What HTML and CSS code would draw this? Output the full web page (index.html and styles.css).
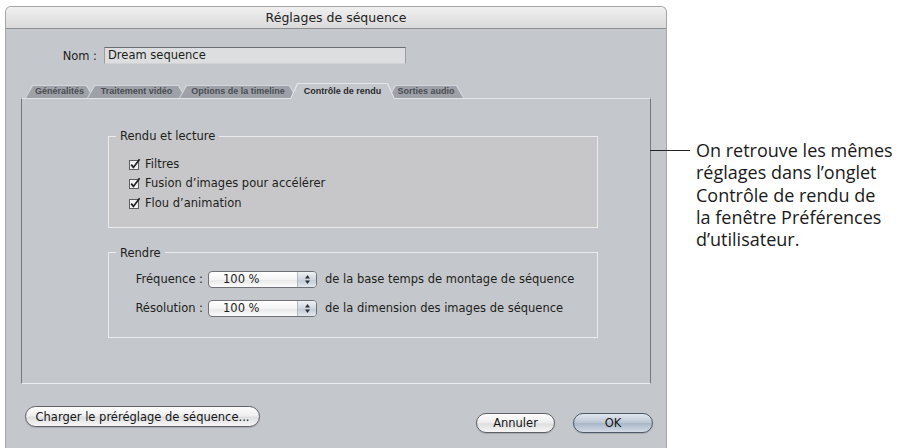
FILE: index.html
```html
<!DOCTYPE html>
<html lang="fr">

<head>
    <meta charset="UTF-8">
    <meta name="viewport" content="width=device-width, initial-scale=1.0">
    <title>Réglages de séquence</title>
    <link rel="stylesheet" href="styles.css">
</head>

<body>
    <div class="page">
        <div class="window">
            <div class="window__title">Réglages de séquence</div>
            <div class="window__body">
                <div class="name">
                    <span class="name__label">Nom :</span>
                    <div class="name__field">Dream sequence</div>
                </div>

                <div class="tabs">
                    <div class="tab tab--1">Généralités</div>
                    <div class="tab tab--2">Traitement vidéo</div>
                    <div class="tab tab--3">Options de la timeline</div>
                    <div class="tab tab--4 tab--active">Contrôle de rendu</div>
                    <div class="tab tab--5">Sorties audio</div>
                </div>

                <div class="panel">
                    <fieldset class="group group--playback">
                        <legend class="group__title">Rendu et lecture</legend>
                        <div class="check">
                            <svg class="check__box" width="12" height="12" viewBox="0 0 12 12">
                                <rect x="0.5" y="2.5" width="9" height="9" fill="#f1f1f1" stroke="#5b5d61" />
                                <path d="M2.2 6.6 L4.4 9.4 L10.6 1.2" fill="none" stroke="#1e1f22" stroke-width="1.7" />
                            </svg>
                            <span>Filtres</span>
                        </div>
                        <div class="check">
                            <svg class="check__box" width="12" height="12" viewBox="0 0 12 12">
                                <rect x="0.5" y="2.5" width="9" height="9" fill="#f1f1f1" stroke="#5b5d61" />
                                <path d="M2.2 6.6 L4.4 9.4 L10.6 1.2" fill="none" stroke="#1e1f22" stroke-width="1.7" />
                            </svg>
                            <span>Fusion d’images pour accélérer</span>
                        </div>
                        <div class="check">
                            <svg class="check__box" width="12" height="12" viewBox="0 0 12 12">
                                <rect x="0.5" y="2.5" width="9" height="9" fill="#f1f1f1" stroke="#5b5d61" />
                                <path d="M2.2 6.6 L4.4 9.4 L10.6 1.2" fill="none" stroke="#1e1f22" stroke-width="1.7" />
                            </svg>
                            <span>Flou d’animation</span>
                        </div>
                    </fieldset>

                    <fieldset class="group group--render">
                        <legend class="group__title">Rendre</legend>
                        <div class="setting">
                            <span class="setting__label">Fréquence :</span>
                            <div class="popup">
                                <span class="popup__value">100 %</span>
                                <span class="popup__arrows">
                                    <svg width="5" height="9" viewBox="0 0 5 9">
                                        <polygon points="2.5,0 5,3.5 0,3.5" fill="#2c2e33" />
                                        <polygon points="0,5.5 5,5.5 2.5,9" fill="#2c2e33" />
                                    </svg>
                                </span>
                            </div>
                            <span class="setting__text">de la base temps de montage de séquence</span>
                        </div>
                        <div class="setting">
                            <span class="setting__label">Résolution :</span>
                            <div class="popup">
                                <span class="popup__value">100 %</span>
                                <span class="popup__arrows">
                                    <svg width="5" height="9" viewBox="0 0 5 9">
                                        <polygon points="2.5,0 5,3.5 0,3.5" fill="#2c2e33" />
                                        <polygon points="0,5.5 5,5.5 2.5,9" fill="#2c2e33" />
                                    </svg>
                                </span>
                            </div>
                            <span class="setting__text">de la dimension des images de séquence</span>
                        </div>
                    </fieldset>
                </div>

                <div class="buttons">
                    <button class="button button--preset">Charger le préréglage de séquence...</button>
                    <div class="buttons__right">
                        <button class="button button--cancel">Annuler</button>
                        <button class="button button--ok">OK</button>
                    </div>
                </div>
            </div>
        </div>

        <div class="note">
            <div class="note__line"></div>
            <p class="note__text">On retrouve les mêmes<br>réglages dans l’onglet<br>Contrôle de rendu de<br>la fenêtre Préférences<br>d’utilisateur.</p>
        </div>
    </div>
</body>

</html>
```

FILE: styles.css
```css
* {
    box-sizing: border-box;
}

html,
body {
    margin: 0;
    padding: 0;
    height: 100%;
}

body {
    background-color: #fff;
    font-family: 'DejaVu Sans', sans-serif;
    font-size: 11.5px;
    color: #1d1e20;
    overflow: hidden;
}

.page {
    display: flex;
    align-items: flex-start;
    padding: 6px 0 0 5px;
}

/* dialog window */

.window {
    flex-shrink: 0;
    width: 662px;
    height: 460px;
    background-color: #c4c7cb;
    border: 1px solid #a3a5a8;
    border-bottom: 0;
    border-radius: 6px 6px 0 0;
}

.window__title {
    height: 22px;
    line-height: 21px;
    text-align: center;
    font-size: 12.5px;
    color: #222;
    background: linear-gradient(#f0f0f0, #dadada);
    border-bottom: 1px solid #8e9093;
    border-radius: 5px 5px 0 0;
}

.window__body {
    padding: 0 13px 0 15px;
}

.name {
    display: flex;
    align-items: center;
    margin-top: 18px;
    height: 17px;
}

.name__label {
    width: 76px;
    margin-right: 7px;
    text-align: right;
}

.name__field {
    width: 302px;
    height: 17px;
    padding: 0 3px;
    line-height: 15px;
    background-color: #dcdedf;
    border: 1px solid #9b9c9e;
    border-top-color: #6c6d70;
    border-bottom-color: #d2d3d5;
}

/* tabs */

.tabs {
    display: flex;
    align-items: flex-end;
    height: 15px;
    margin-top: 19px;
    padding-left: 4px;
}

.tab {
    position: relative;
    height: 13px;
    line-height: 13px;
    text-align: center;
    font-family: 'Liberation Sans', sans-serif;
    font-size: 9px;
    font-weight: bold;
    color: #4a4d52;
    margin-left: -7px;
}

.tab::before,
.tab::after {
    content: '';
    position: absolute;
    inset: 0;
    z-index: -1;
}

.tab::before {
    background-color: #d3d6da;
    clip-path: polygon(7px 0, calc(100% - 7px) 0, 100% 100%, 0 100%);
}

.tab::after {
    background-color: #9ea2a8;
    clip-path: polygon(8px 1px, calc(100% - 8px) 1px, calc(100% - 1px) 100%, 1px 100%);
}

.tab--1 {
    width: 69px;
    margin-left: 0;
    z-index: 1;
}

.tab--2 {
    width: 99px;
    z-index: 2;
}

.tab--3 {
    width: 118px;
    z-index: 3;
}

.tab--4 {
    width: 105px;
    z-index: 5;
}

.tab--5 {
    width: 76px;
    z-index: 4;
}

.tab--active {
    height: 16px;
    line-height: 16px;
    margin-bottom: -1px;
    color: #2a2b2e;
}

.tab--active::before {
    background-color: #e4e6e9;
}

.tab--active::after {
    background-color: #c4c7cb;
}

/* tab content */

.panel {
    width: 630px;
    height: 286px;
    padding-top: 30px;
    padding-left: 86px;
    border: 1px solid #76787c;
    border-top-color: #e2e4e7;
    border-bottom-color: #eceef0;
}

.group {
    width: 490px;
    margin: 0;
    padding: 11px 0 0 7px;
    border: 1px solid #e9ebed;
}

.group__title {
    margin-left: 0;
    padding: 0 4px;
    line-height: 14px;
}

.group--playback {
    background-color: #c7c7ca;
    padding-bottom: 14px;
}

.group--render {
    margin-top: 18px;
    padding-bottom: 20px;
}

.check {
    display: flex;
    align-items: center;
    height: 19.5px;
    margin-left: 13px;
    gap: 4px;
}

.check__box {
    flex-shrink: 0;
}

.setting {
    display: flex;
    align-items: center;
    height: 17px;
}

.setting+.setting {
    margin-top: 12px;
}

.setting__label {
    width: 87px;
    margin-right: 5px;
    text-align: right;
}

.setting__text {
    margin-left: 8px;
}

.popup {
    display: flex;
    width: 109px;
    height: 17px;
    border: 1px solid #6f7176;
    border-radius: 4px;
    background: linear-gradient(#ffffff, #f4f4f4 50%, #e7e7e7 51%, #fbfbfb);
    overflow: hidden;
}

.popup__value {
    flex: 1;
    padding-left: 14px;
    line-height: 15px;
}

.popup__arrows {
    display: flex;
    align-items: center;
    justify-content: center;
    width: 19px;
    border-left: 1px solid #b4bac2;
    background: linear-gradient(#eef1f5, #cfd6df 50%, #c0c9d4 51%, #e3e8ee);
}

/* bottom buttons */

.buttons {
    display: flex;
    justify-content: space-between;
    align-items: flex-start;
    margin-top: 22px;
    padding-left: 4px;
}

.buttons__right {
    display: flex;
    gap: 18px;
    margin-top: 7px;
}

.button {
    height: 21px;
    padding: 0;
    font-family: 'DejaVu Sans', sans-serif;
    font-size: 11.5px;
    color: #151618;
    border: 1px solid #5d6065;
    border-radius: 11px;
    background: linear-gradient(#fdfdfd, #efefef 45%, #dfdfdf 55%, #f6f6f6);
    box-shadow: 0 1px 1px rgb(0 0 0 / 15%);
}

.button--preset {
    width: 235px;
}

.button--cancel {
    width: 79px;
    height: 20px;
}

.button--ok {
    width: 80px;
    height: 20px;
    border-color: #4f5867;
    background: linear-gradient(#e1e7ee, #bcc7d4 48%, #a9b7c8 52%, #d3dbe5);
}

/* annotation */

.note {
    display: flex;
    align-items: flex-start;
    margin-top: 133px;
    margin-left: -17px;
}

.note__line {
    width: 40px;
    height: 1px;
    margin-top: 11px;
    margin-right: 6px;
    background-color: #222;
}

.note__text {
    margin: 0;
    font-family: 'Open Sans', sans-serif;
    font-size: 18px;
    line-height: 22.3px;
    color: #1a1a1a;
    white-space: nowrap;
}
```
